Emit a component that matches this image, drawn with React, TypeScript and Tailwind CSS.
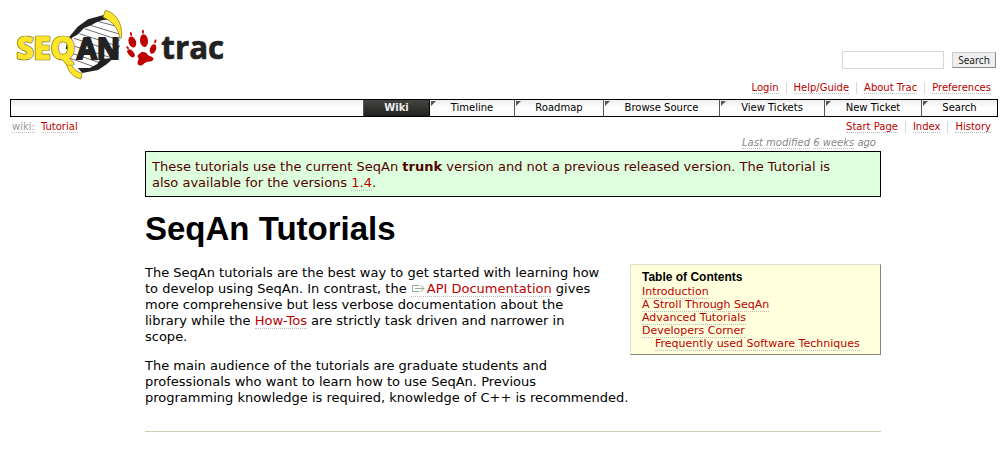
import type { ReactNode } from "react";

function Link({ children, className = "" }: { children: ReactNode; className?: string }) {
  return (
    <a href="#" className={`border-b border-dotted border-[#bbb] ${className || "text-[#b00]"}`}>
      {children}
    </a>
  );
}

function Logo() {
  return (
    <svg viewBox="0 0 660 210" className="block h-[70px] w-[220px]" role="img" aria-label="SeqAn trac">
      <g transform="translate(-30 -33)">
        <path d="M199 145 C207 108 250 68 322 47 L351 72 L359 135 C340 180 290 210 236 219 L210 190Z" fill="#fff" />
        <g stroke="#222" strokeWidth="2" fill="none">
          <path d="M290 66 L350 82M274 80 L358 105M254 89 L360 124M238 104 L359 143M222 118 L357 162M205 136 L346 180M202 158 L313 196M203 175 L292 207" />
        </g>
        <path d="M205 117 L233 83 L264 61 L322 45 L337 62 C307 59 284 71 274 79 L252 87 L234 106 L216 116 L203 150 L197 150Z" fill="#222" />
        <path d="M360 135 L348 170 L320 196 L294 213 L247 222 L233 207 L269 207 L292 195 L302 180 L330 178 L347 156Z" fill="#222" />
        <path d="M316 34 C344 40 370 70 364 117 L359 119 C357 91 339 67 309 55Z" fill="#ffe529" stroke="#766b20" strokeWidth="2" />
        <path d="M196 174 C198 207 211 234 243 240 L246 223 C223 217 211 199 207 174Z" fill="#ffe529" stroke="#766b20" strokeWidth="2" />
        <g fontSize="92" fontWeight="700" fontFamily="'Open Sans', sans-serif" fill="#ffe529" strokeLinejoin="round">
          <text x="50" y="180" stroke="#766b20" strokeWidth="8">
            SEQ
          </text>
          <text x="50" y="180" stroke="#ffe529" strokeWidth="4" aria-hidden="true">
            SEQ
          </text>
        </g>
        <text x="231" y="180" fontSize="86" fontWeight="700" fontFamily="'Open Sans', sans-serif" fill="#222" stroke="#222" strokeWidth="6">
          AN
        </text>
        <g fill="#c00000">
          <ellipse cx="397" cy="129" rx="11" ry="17" transform="rotate(-18 397 129)" />
          <ellipse cx="432" cy="125" rx="12" ry="19" transform="rotate(-5 432 125)" />
          <ellipse cx="393" cy="163" rx="8" ry="14" transform="rotate(-42 393 163)" />
          <ellipse cx="459" cy="150" rx="9" ry="15" transform="rotate(20 459 150)" />
          <ellipse cx="393" cy="105" rx="3" ry="6" transform="rotate(-15 393 105)" />
          <ellipse cx="429" cy="98" rx="3" ry="6" />
          <ellipse cx="466" cy="127" rx="3" ry="6" transform="rotate(15 466 127)" />
          <ellipse cx="383" cy="146" rx="3" ry="5" transform="rotate(-35 383 146)" />
          <path d="M418 164 C425 156 439 158 444 168 C451 174 462 172 460 181 C457 191 445 186 438 190 C430 195 425 203 416 198 C408 192 417 185 416 178 C412 174 411 169 418 164Z" />
        </g>
        <text x="484" y="180" fontSize="94" fontWeight="700" fontFamily="'Open Sans', sans-serif" fill="#222" stroke="#222" strokeWidth="2">
          trac
        </text>
      </g>
    </svg>
  );
}

function LinkBar({ items, label }: { items: string[]; label: string }) {
  return (
    <nav aria-label={label}>
      <ul className="flex text-[10px] leading-[12px]">
        {items.map((item, i) => (
          <li key={item} className={i < items.length - 1 ? "mr-[7px] border-r border-[#d7d7d7] pr-[7px]" : "pr-[7px]"}>
            <Link>{item}</Link>
          </li>
        ))}
      </ul>
    </nav>
  );
}

const tabs = [
  { name: "Timeline", width: "w-[84px]" },
  { name: "Roadmap", width: "w-[89px]" },
  { name: "Browse Source", width: "w-[116px]" },
  { name: "View Tickets", width: "w-[105px]" },
  { name: "New Ticket", width: "w-[97px]" },
  { name: "Search", width: "w-[76px]" },
];

function MainNav() {
  return (
    <nav aria-label="Main" className="mt-[5px] border border-black bg-linear-to-b from-[#ededed] via-white to-[#f7f7f7]">
      <ul className="flex h-4 justify-end text-[10px] leading-4">
        <li className="w-[67px] border-x border-[#555] border-r-black bg-linear-to-b from-[#444541] to-[#222320] text-center font-bold text-[#eee]">
          <a href="#" className="block">Wiki</a>
        </li>
        {tabs.map((tab, i) => (
          <li key={tab.name} className={`relative text-center ${tab.width} ${i > 0 ? "border-l border-[#555]" : ""}`}>
            <svg viewBox="0 0 5 5" className="absolute top-px left-px size-[5px]" aria-hidden="true">
              <path d="M0 0H5L0 5Z" fill="#555" />
            </svg>
            <a href="#" className="block text-black">{tab.name}</a>
          </li>
        ))}
      </ul>
    </nav>
  );
}

const contents = ["Introduction", "A Stroll Through SeqAn", "Advanced Tutorials", "Developers Corner"];

export default function App() {
  return (
    <div className="bg-white px-[10px] pt-[10px] font-['DejaVu_Sans',Verdana,sans-serif] text-[13px] leading-4 text-black">
      <header>
        <div className="flex items-start justify-between">
          <a href="#" className="block">
            <Logo />
          </a>
          <form className="mt-[41px] mr-[2px] flex items-center gap-2" onSubmit={(e) => e.preventDefault()}>
            <input type="text" aria-label="Search text" className="h-[18px] w-[102px] border border-[#d7d7d7] px-1 text-[10px] outline-none" />
            <button type="submit" className="h-4 w-11 border border-[#ccc] border-r-[#888] border-b-[#888] bg-[#eee] font-['Noto_Sans',sans-serif] text-[10px] leading-[14px] text-[#222]">
              Search
            </button>
          </form>
        </div>
        <div className="mt-[2px] flex justify-end">
          <LinkBar label="Account" items={["Login", "Help/Guide", "About Trac", "Preferences"]} />
        </div>
        <MainNav />
      </header>

      <div className="mt-[4px] flex justify-between">
        <div className="flex gap-[6px] pl-[2px] text-[10px] leading-[12px]">
          <span>
            <Link className="text-[#999]">wiki:</Link>
          </span>
          <span>
            <Link>Tutorial</Link>
          </span>
        </div>
        <LinkBar label="Page" items={["Start Page", "Index", "History"]} />
      </div>

      <main className="pl-[18px]">
        <div className="mx-auto max-w-[736px]">
          <p className="mt-1 pr-[5px] text-right text-[10px] leading-[12px] text-[#888] italic">
            <Link className="text-[#888]">Last modified</Link> <Link className="text-[#888]">6 weeks</Link> ago
          </p>
          <div className="mt-[2px] border border-black bg-[#dfd] px-[6px] pt-[7px] pb-[5px] text-[#500]">
            These tutorials use the current SeqAn <strong>trunk</strong> version and not a previous released version. The Tutorial
            is
            <br />
            also available for the versions <Link>1.4</Link>.
          </div>
          <h1 className="mt-3 font-['Liberation_Sans',Arial,sans-serif] text-[33px] leading-[40px] font-bold">SeqAn Tutorials</h1>

          <aside className="float-right mt-[15px] mb-2 ml-4 w-[251px] border border-[#ddc] border-r-[#887] border-b-[#887] bg-[#ffd] px-[11px] pt-[5px] pb-1 text-[11px] leading-[13px]">
            <h2 className="mb-px font-['Liberation_Sans',Arial,sans-serif] text-[12px] leading-[14px] font-bold">Table of Contents</h2>
            <ol>
              {contents.map((entry) => (
                <li key={entry}>
                  <Link>{entry}</Link>
                </li>
              ))}
              <li className="pl-[13px] whitespace-nowrap">
                <Link>Frequently used Software Techniques</Link>
              </li>
            </ol>
          </aside>

          <p className="mt-4">
            The SeqAn tutorials are the best way to get started with learning how
            <br />
            to develop using SeqAn. In contrast, the{" "}
            <Link>
              <svg viewBox="0 0 14 9" className="mr-[2px] inline h-[9px] w-[14px] align-baseline" fill="none" stroke="#9aab9a" aria-hidden="true">
                <path d="M8 1.5H1.5V7.5H8M4 4.5H13M9.5 1L13 4.5L9.5 8" />
              </svg>
              API Documentation
            </Link>{" "}
            gives
            <br />
            more comprehensive but less verbose documentation about the
            <br />
            library while the <Link>How-Tos</Link> are strictly task driven and narrower in
            <br />
            scope.
          </p>
          <p className="mt-[13px]">
            The main audience of the tutorials are graduate students and
            <br />
            professionals who want to learn how to use SeqAn. Previous
            <br />
            programming knowledge is required, knowledge of C++ is recommended.
          </p>
          <hr className="mt-[25px] clear-both border-t border-[#ccccbb]" />
        </div>
      </main>
    </div>
  );
}
